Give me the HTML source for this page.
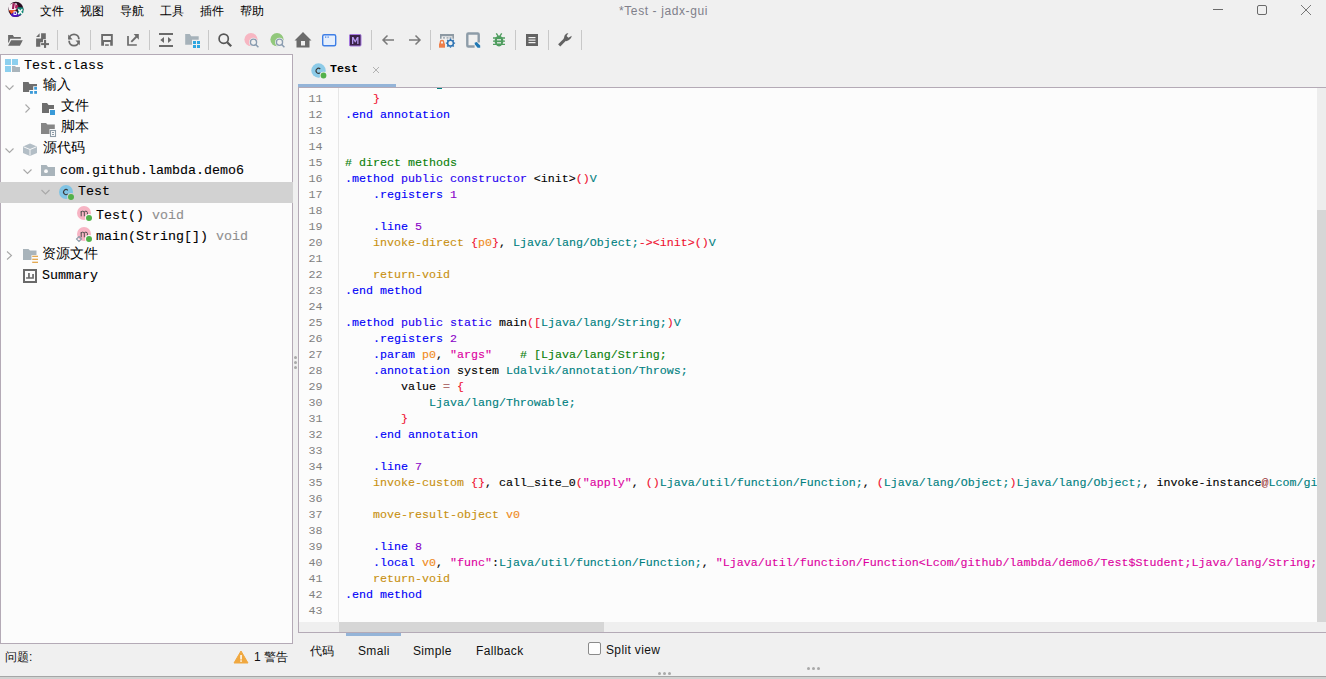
<!DOCTYPE html>
<html><head><meta charset="utf-8">
<style>
*{margin:0;padding:0;box-sizing:border-box}
html,body{width:1326px;height:679px;overflow:hidden;background:#f0f0f0;font-family:"Liberation Sans",sans-serif;color:#000}
.a{position:absolute}
.menu span{position:absolute;top:3px;font-size:12px;line-height:16px;color:#000}
.sep{position:absolute;top:31px;width:1px;height:19px;background:#c4c4c4}
.tb{position:absolute;top:32px;width:16px;height:16px}
#tree{left:0;top:54px;width:293px;height:590px;background:#fcfcfc;border:1px solid #b4aab6}
.row{position:absolute;-webkit-text-stroke:0.1px currentColor;font-family:"Liberation Mono",monospace;font-size:13.33px;line-height:16px;white-space:pre;color:#000}
.cjk{font-family:"Liberation Sans",sans-serif;font-size:14px;-webkit-text-stroke:0}
.chev{position:absolute;width:10px;height:6px}
#code{left:298px;top:87px;width:1028px;height:546px;background:#fcfcfc;border:1px solid #b4aab6;border-right:none}
.ln{position:absolute;left:0;width:23.5px;text-align:right;font-family:"Liberation Mono",monospace;font-size:11.667px;line-height:16px;color:#808080}
.cl{position:absolute;left:46px;-webkit-text-stroke:0.12px currentColor;font-family:"Liberation Mono",monospace;font-size:11.667px;line-height:16px;white-space:pre;color:#000}
.d{color:#0000f8}.m{color:#2800f0}.n{color:#8a00c8}.o{color:#c89010}.r{color:#f01030}.t{color:#00807f}.s{color:#dc00a0}.g{color:#0a800a}.p{color:#f08a20}.k{color:#000}.q{color:#b07070}.u{color:#a04040}
.btab{position:absolute;top:643px;font-size:12px;line-height:16px;letter-spacing:0.35px;color:#111}
</style></head><body>
<!-- title bar -->
<div class="a" style="left:0;top:0;width:1326px;height:25px;background:#f0f0f0"></div>
<svg class="a" style="left:0;top:0" width="30" height="20" viewBox="0 0 30 20">
<circle cx="15.9" cy="9.3" r="7.6" fill="#2a0e22"/>
<path d="M9 5L13 3L17 3.5L17.5 8.5L14.5 10.5H8.6Z" fill="#f6eef2"/>
<path d="M12.5 3.2L15 3L14 9L12 9Z" fill="#9a1a58"/>
<path d="M15.5 4L18.5 6L17 9L15 8Z" fill="#b02060"/>
<path d="M8.8 10.2L16 10L11.8 14.6Z" fill="#f25522"/>
<path d="M10.5 14.5L15 11.5L21 15.2L16 17L12 16.5Z" fill="#4a12c0"/>
<path d="M13.5 11.2H16.5Q18 13 16.5 15H13.5Z" fill="#f8f4fc"/>
<path d="M14.5 12.3H15.8Q16.6 13 15.8 14H14.5Z" fill="#4a12c0"/>
<path d="M17.3 7.2L23.2 7.5L23.4 12.5L21 15L17.5 14L18 11Z" fill="#128a78"/>
<path d="M18.3 9.3L22.3 14.2M22.3 9.3L18.3 14.2" stroke="#f4fbf8" stroke-width="1.5"/>
</svg>
<div class="menu">
 <span style="left:40px">文件</span><span style="left:80px">视图</span><span style="left:120px">导航</span><span style="left:160px">工具</span><span style="left:200px">插件</span><span style="left:240px">帮助</span>
</div>
<div class="a" style="left:619px;top:3px;font-size:12px;line-height:16px;letter-spacing:0.6px;color:#7f7f8a">*Test - jadx-gui</div>
<div class="a" style="left:1213px;top:9px;width:10px;height:1px;background:#6a6a6a"></div>
<div class="a" style="left:1257px;top:5px;width:10px;height:10px;border:1px solid #6a6a6a;border-radius:2px"></div>
<svg class="a" style="left:1300px;top:4px" width="12" height="12" viewBox="0 0 12 12"><path d="M1 1L11 11M11 1L1 11" stroke="#6a6a6a" stroke-width="0.9"/></svg>

<!-- toolbar -->
<svg class="a" style="left:0;top:0" width="600" height="54" viewBox="0 0 600 54">
<g fill="#c8c8c8">
<rect x="57" y="30" width="1" height="20"/><rect x="90" y="30" width="1" height="20"/><rect x="149" y="30" width="1" height="20"/><rect x="208" y="30" width="1" height="20"/><rect x="371" y="30" width="1" height="20"/><rect x="430" y="30" width="1" height="20"/><rect x="515" y="30" width="1" height="20"/><rect x="548" y="30" width="1" height="20"/><rect x="581" y="30" width="1" height="20"/>
</g>
<g fill="#6b6b6b">
<path d="M8.1 35H12.8L14 36.9H20.8V38.7H10.2L8.9 42.6H8.1Z"/>
<path d="M11.2 40.2H22.8L19.9 45.8H8.1Z"/>
<path d="M41.1 33.2H45.8V39.3H43V42.2H40.3V46.8H36.1V38.4H41.1Z"/><path d="M36.1 37L39.6 33.2V37Z"/><rect x="41.1" y="43.1" width="7.9" height="2"/><rect x="44" y="40" width="2.1" height="7.9"/>
<path d="M101.2 34H112.8V45.8H101.2ZM103 36V40H110.9V36ZM104 42V45.8H110.2V42Z" fill-rule="evenodd"/><rect x="105.1" y="44.3" width="3.7" height="1.5"/>
<path d="M159 33H173V35H159ZM159 45H173V47H159ZM160.3 40L164 37V43ZM171.6 40L168 37V43Z"/>
<path d="M294.5 40.5L303 32L311.5 40.5H309.5V47.5H296.5V40.5ZM301 41V45.5H305V41Z" fill-rule="evenodd"/>
<rect x="526" y="34" width="12" height="12" fill="#636363"/>
</g>
<g fill="none" stroke="#6b6b6b">
<path d="M69.1 39.2A4.9 4.9 0 0 1 78.9 39.2" stroke-width="1.8"/>
<path d="M78.9 40.8A4.9 4.9 0 0 1 69.1 40.8" stroke-width="1.8"/>
<path d="M128 36.1V45H136.8" stroke-width="1.7"/>
<path d="M131.3 41.8L136.6 36.5" stroke-width="1.9"/>
<circle cx="223.7" cy="38.7" r="4.6" stroke-width="1.7" stroke="#575757"/>
<path d="M227.2 42.2L231.2 46.2" stroke-width="2.3" stroke="#575757"/>
<path d="M383 40H394M387.5 35.5L383 40L387.5 44.5" stroke-width="1.5" stroke="#7a7a7a"/>
<path d="M420 40H409M415.5 35.5L420 40L415.5 44.5" stroke-width="1.5" stroke="#7a7a7a"/>
</g>
<path d="M68.2 34.5V39.5H72.6Z" fill="#6b6b6b"/>
<path d="M79.8 45.3V40.5H75.5Z" fill="#6b6b6b"/>
<path d="M133.7 34.1H138.8V39.8Z" fill="#6b6b6b"/>
<rect x="528.5" y="37" width="7" height="1.2" fill="#f4f4f4"/><rect x="528.5" y="39.5" width="7" height="1.2" fill="#f4f4f4"/><rect x="528.5" y="42" width="7" height="1.2" fill="#f4f4f4"/>
<path d="M185.2 34.1H189.7L191.2 36.2H198.7V39.8H192V44.7H185.2Z" fill="#a6b2ba"/>
<g fill="#2ea6e0"><rect x="193" y="41" width="3" height="3"/><rect x="197" y="41" width="3" height="3"/><rect x="193" y="45" width="3" height="3"/><rect x="197" y="45" width="3" height="3"/></g>
<circle cx="251" cy="39.6" r="6.6" fill="#f7b6c2"/><circle cx="253.5" cy="42.3" r="4.5" fill="#f0f0f0"/>
<circle cx="253.5" cy="42.3" r="3.1" fill="none" stroke="#8a9cb0" stroke-width="1.3"/><path d="M255.7 44.5L258.4 47.2" stroke="#8a9cb0" stroke-width="1.5"/>
<circle cx="277" cy="39.6" r="6.6" fill="#92c87c"/><circle cx="279.5" cy="42.3" r="4.5" fill="#f0f0f0"/>
<circle cx="279.5" cy="42.3" r="3.1" fill="none" stroke="#8a9cb0" stroke-width="1.3"/><path d="M281.7 44.5L284.4 47.2" stroke="#8a9cb0" stroke-width="1.5"/>
<rect x="322.7" y="34.7" width="13" height="11" rx="1.5" fill="#e6effc" stroke="#3f7fe6" stroke-width="1.4"/>
<rect x="325" y="36.5" width="1.3" height="1.2" fill="#3f7fe6"/><rect x="327.5" y="36.5" width="1.3" height="1.2" fill="#3f7fe6"/>
<rect x="349.5" y="34.5" width="11.5" height="11.5" rx="1" fill="#3a2248" stroke="#a678e0" stroke-width="1"/>
<path d="M352 44V37H353.5L355.2 40.5L357 37H358.5V44H357.2V39.5L355.5 42.5H355L353.3 39.5V44Z" fill="#b69af0"/>
<path d="M440 34H454V38.7H452.4V36.3H441.6V38.7H440Z" fill="#8d99a3"/>
<rect x="443" y="37.3" width="2" height="1.2" fill="#8d99a3"/><rect x="446.5" y="37.3" width="2" height="1.2" fill="#8d99a3"/><rect x="449.5" y="37.3" width="2" height="1.2" fill="#8d99a3"/>
<path d="M440.3 44V42.2A1.7 1.7 0 0 1 443.7 42.2V44" fill="none" stroke="#ef7f4a" stroke-width="1.4"/>
<rect x="439" y="43.5" width="6" height="4.2" fill="#ef7f4a"/>
<circle cx="450.5" cy="43.2" r="2.9" fill="none" stroke="#2f74b4" stroke-width="1.5"/>
<path d="M450.5 38.6V40M450.5 46.4V47.8M445.9 43.2H447.3M453.7 43.2H455.1M447.2 39.9L448.2 40.9M452.8 45.5L453.8 46.5M453.8 39.9L452.8 40.9M448.2 45.5L447.2 46.5" stroke="#2f74b4" stroke-width="1.3"/>
<path d="M467.3 42V34.5Q467.3 33.5 468.3 33.5H477.7Q478.7 33.5 478.7 34.5V42.4M474.6 46.5H468.3Q467.3 46.5 467.3 45.5V42" fill="none" stroke="#8d9ca8" stroke-width="2.4"/>
<path d="M474.6 42.8L476.6 42L480.2 45.6V47.8H477.6L474.9 44.6Z" fill="#1f78b4"/>
<g fill="#4f9d5f">
<ellipse cx="499" cy="41" rx="4.4" ry="5.4"/>
<path d="M496.3 33.3L498 36M501.7 33.3L500 36" stroke="#4f9d5f" stroke-width="1.4"/>
<path d="M493 38H505M493 41.2H505M493 44.4H505" stroke="#4f9d5f" stroke-width="1.3"/>
</g>
<rect x="497" y="39.2" width="4" height="1.2" fill="#f0f0f0"/><rect x="497" y="42.2" width="4" height="1.2" fill="#f0f0f0"/>
<path d="M559.2 45.4L565.6 39" stroke="#626262" stroke-width="3"/>
<path d="M563.6 39.2L564.6 35.6Q565.8 33.4 568.4 33.1L566.6 35.9L568.4 37.7L571.8 35.8Q571.6 38.6 569 39.9L566.4 41.2Z" fill="#626262"/>
</svg>

<!-- left tree -->
<div id="tree" class="a">
<div class="a" style="left:-1px;top:127px;width:293px;height:21px;background:#d2d2d2"></div>
<svg class="a" style="left:-1px;top:-55px" width="293" height="300" viewBox="0 0 293 300">
<g fill="#8ccfee"><rect x="5" y="59" width="6" height="6"/><rect x="12" y="59" width="6" height="6"/><rect x="5" y="66" width="6" height="6"/></g>
<path d="M12 66H15L16 67H20V72H12Z" fill="#a9b4bb"/>
<g fill="none" stroke="#a8a8a8" stroke-width="1.1">
<path d="M5.5 85.5L9.5 89.5L13.5 85.5"/>
<path d="M25.5 104.5L29.5 108.5L25.5 112.5"/>
<path d="M5.5 148.5L9.5 152.5L13.5 148.5"/>
<path d="M23.5 169.5L27.5 173.5L31.5 169.5"/>
<path d="M41.5 190L45.5 194L49.5 190"/>
<path d="M7 251.5L11.5 255.5L7 259.5"/>
</g>
<path d="M23 82H28.5L29.5 84H37V86.3H33.2V90H29.2V91.9H23Z" fill="#6e6e6e"/>
<g fill="#3a9ad8"><rect x="34.2" y="86.9" width="2.8" height="2.8"/><rect x="30" y="91" width="2.9" height="2.8"/><rect x="34.2" y="91" width="2.8" height="2.8"/></g>
<path d="M42 103H47L48.5 105H54V109H49V113H42Z" fill="#6e6e6e"/>
<rect x="50" y="110" width="5" height="5" fill="#3a9ad8"/>
<path d="M41 123H46L47.5 124.5H54.8V129H49.5V134H41Z" fill="#868686"/>
<rect x="50.5" y="130.5" width="5" height="6" fill="#fcfcfc" stroke="#8d9ca8" stroke-width="1.1"/>
<rect x="52" y="132" width="2" height="1" fill="#8d9ca8"/><rect x="52" y="134" width="2" height="1" fill="#8d9ca8"/>
<path d="M30 143.5L37 146.5V153L30 156L23 153V146.5Z" fill="#b3bec6"/>
<path d="M23.5 146.8L30 149.5L36.5 146.8M30 149.5V155.5" fill="none" stroke="#fcfcfc" stroke-width="0.9"/>
<path d="M41 165H46.5L48 167H55V176H41Z" fill="#a9b4bb"/>
<circle cx="46" cy="171.2" r="1.9" fill="#fcfcfc"/>
<circle cx="66" cy="192" r="7" fill="#80c4e4"/>
<path d="M67.8 190.3A2.5 2.5 0 1 0 67.8 193.9" fill="none" stroke="#3a3a3a" stroke-width="1.1"/>
<circle cx="71" cy="197" r="3.9" fill="#d2d2d2"/><circle cx="71" cy="197" r="3" fill="#52b14a"/>
<circle cx="84" cy="213" r="7" fill="#f7b4c4"/>
<path d="M81.2 216.3V211M81.2 212.3Q81.2 211.2 82.6 211.2Q84.3 211.2 84.3 212.5V216.3M84.3 212.5Q84.3 211.2 85.7 211.2Q87.4 211.2 87.4 212.5V216.3" fill="none" stroke="#4a4a4a" stroke-width="1"/>
<circle cx="89" cy="218" r="3.9" fill="#fcfcfc"/><circle cx="89" cy="218" r="3" fill="#52b14a"/>
<circle cx="84" cy="234" r="7" fill="#f7b4c4"/>
<path d="M81.2 237.3V232M81.2 233.3Q81.2 232.2 82.6 232.2Q84.3 232.2 84.3 233.5V237.3M84.3 233.5Q84.3 232.2 85.7 232.2Q87.4 232.2 87.4 233.5V237.3" fill="none" stroke="#4a4a4a" stroke-width="1"/>
<circle cx="89" cy="239" r="3.9" fill="#fcfcfc"/><circle cx="89" cy="239" r="3" fill="#52b14a"/>
<path d="M79 236.5L81.5 239L79 241.5L76.5 239Z" fill="none" stroke="#8c9aa8" stroke-width="1.1"/>
<path d="M23 249H28.5L30 250.5H36.5V255H31.5V260H23Z" fill="#a9b4bb"/>
<g fill="#e0a040"><rect x="32.2" y="255.7" width="5.8" height="1.2"/><rect x="32.2" y="258.7" width="5.8" height="1.2"/><rect x="32.2" y="261.7" width="5.8" height="1.2"/></g>
<rect x="24" y="270" width="12" height="12" fill="none" stroke="#6a6a6a" stroke-width="2"/>
<path d="M26.1 277.2H28.1V273.1H29.8V277.2H32.2V274.1H33.9V278.7H26.1Z" fill="#6a6a6a"/>
</svg>
<div class="row" style="left:23px;top:2.5px">Test.class</div>
<div class="row cjk" style="left:42px;top:21px">输入</div>
<div class="row cjk" style="left:60px;top:42px">文件</div>
<div class="row cjk" style="left:60px;top:63px">脚本</div>
<div class="row cjk" style="left:42px;top:84px">源代码</div>
<div class="row" style="left:59px;top:108px">com.github.lambda.demo6</div>
<div class="row" style="left:77px;top:129px">Test</div>
<div class="row" style="left:95px;top:153px">Test() <span style="color:#8f8f8f">void</span></div>
<div class="row" style="left:95px;top:174px">main(String[]) <span style="color:#8f8f8f">void</span></div>
<div class="row cjk" style="left:41px;top:190px">资源文件</div>
<div class="row" style="left:41px;top:212.5px">Summary</div>
</div>

<!-- splitter -->
<div class="a" style="left:294px;top:54px;width:4px;height:589px;background:#f0f0f0"></div>

<!-- code panel -->
<div id="code" class="a">
<div class="a" style="left:0;top:0;width:1018px;height:534px;overflow:hidden;background:#fcfcfc">
<div class="a" style="left:39px;top:0;width:1px;height:535px;background:#e6e6e6"></div>
<div class="ln" style="top:2.90px">11</div>
<div class="cl" style="top:2.90px">    <span class="r">}</span></div>
<div class="ln" style="top:18.90px">12</div>
<div class="cl" style="top:18.90px"><span class="d">.end annotation</span></div>
<div class="ln" style="top:34.90px">13</div>
<div class="ln" style="top:50.90px">14</div>
<div class="ln" style="top:66.90px">15</div>
<div class="cl" style="top:66.90px"><span class="g"># direct methods</span></div>
<div class="ln" style="top:82.90px">16</div>
<div class="cl" style="top:82.90px"><span class="d">.method</span><span class="m"> public constructor</span><span class="k"> &lt;init&gt;</span><span class="r">()</span><span class="t">V</span></div>
<div class="ln" style="top:98.90px">17</div>
<div class="cl" style="top:98.90px"><span class="d">    .registers</span><span class="n"> 1</span></div>
<div class="ln" style="top:114.90px">18</div>
<div class="ln" style="top:130.90px">19</div>
<div class="cl" style="top:130.90px"><span class="d">    .line</span><span class="n"> 5</span></div>
<div class="ln" style="top:146.90px">20</div>
<div class="cl" style="top:146.90px"><span class="o">    invoke-direct</span><span class="r"> {</span><span class="p">p0</span><span class="r">}</span><span class="k">, </span><span class="t">Ljava/lang/Object;</span><span class="r">-&gt;&lt;init&gt;()</span><span class="t">V</span></div>
<div class="ln" style="top:162.90px">21</div>
<div class="ln" style="top:178.90px">22</div>
<div class="cl" style="top:178.90px"><span class="o">    return-void</span></div>
<div class="ln" style="top:194.90px">23</div>
<div class="cl" style="top:194.90px"><span class="d">.end method</span></div>
<div class="ln" style="top:210.90px">24</div>
<div class="ln" style="top:226.90px">25</div>
<div class="cl" style="top:226.90px"><span class="d">.method</span><span class="m"> public static</span><span class="k"> main</span><span class="r">([</span><span class="t">Ljava/lang/String;</span><span class="r">)</span><span class="t">V</span></div>
<div class="ln" style="top:242.90px">26</div>
<div class="cl" style="top:242.90px"><span class="d">    .registers</span><span class="n"> 2</span></div>
<div class="ln" style="top:258.90px">27</div>
<div class="cl" style="top:258.90px"><span class="d">    .param</span><span class="p"> p0</span><span class="k">, </span><span class="s">&quot;args&quot;</span><span class="g">    # [Ljava/lang/String;</span></div>
<div class="ln" style="top:274.90px">28</div>
<div class="cl" style="top:274.90px"><span class="d">    .annotation</span><span class="k"> system </span><span class="t">Ldalvik/annotation/Throws;</span></div>
<div class="ln" style="top:290.90px">29</div>
<div class="cl" style="top:290.90px"><span class="k">        value </span><span class="q">=</span><span class="r"> {</span></div>
<div class="ln" style="top:306.90px">30</div>
<div class="cl" style="top:306.90px"><span class="t">            Ljava/lang/Throwable;</span></div>
<div class="ln" style="top:322.90px">31</div>
<div class="cl" style="top:322.90px"><span class="r">        }</span></div>
<div class="ln" style="top:338.90px">32</div>
<div class="cl" style="top:338.90px"><span class="d">    .end annotation</span></div>
<div class="ln" style="top:354.90px">33</div>
<div class="ln" style="top:370.90px">34</div>
<div class="cl" style="top:370.90px"><span class="d">    .line</span><span class="n"> 7</span></div>
<div class="ln" style="top:386.90px">35</div>
<div class="cl" style="top:386.90px"><span class="o">    invoke-custom</span><span class="r"> {}</span><span class="k">, call_site_0</span><span class="r">(</span><span class="s">&quot;apply&quot;</span><span class="k">, </span><span class="r">()</span><span class="t">Ljava/util/function/Function;</span><span class="k">, </span><span class="r">(</span><span class="t">Ljava/lang/Object;</span><span class="r">)</span><span class="t">Ljava/lang/Object;</span><span class="k">, invoke-instance</span><span class="u">@</span><span class="t">Lcom/github/lambda/demo6/Test$Student;-&gt;lambda$main$0(Lcom/github/lambda/demo6/Test$Student;)Ljava/lang/String;</span></div>
<div class="ln" style="top:402.90px">36</div>
<div class="ln" style="top:418.90px">37</div>
<div class="cl" style="top:418.90px"><span class="o">    move-result-object</span><span class="p"> v0</span></div>
<div class="ln" style="top:434.90px">38</div>
<div class="ln" style="top:450.90px">39</div>
<div class="cl" style="top:450.90px"><span class="d">    .line</span><span class="n"> 8</span></div>
<div class="ln" style="top:466.90px">40</div>
<div class="cl" style="top:466.90px"><span class="d">    .local</span><span class="p"> v0</span><span class="k">, </span><span class="s">&quot;func&quot;</span><span class="k">:</span><span class="t">Ljava/util/function/Function;</span><span class="k">, </span><span class="s">&quot;Ljava/util/function/Function&lt;Lcom/github/lambda/demo6/Test$Student;Ljava/lang/String;&gt;;&quot;</span></div>
<div class="ln" style="top:482.90px">41</div>
<div class="cl" style="top:482.90px"><span class="o">    return-void</span></div>
<div class="ln" style="top:498.90px">42</div>
<div class="cl" style="top:498.90px"><span class="d">.end method</span></div>
<div class="ln" style="top:514.90px">43</div>
</div>
<div class="a" style="left:1018px;top:0;width:9px;height:122px;background:#ededed"></div>
<div class="a" style="left:1018px;top:122px;width:9px;height:412px;background:#d6d6d6"></div>
<div class="a" style="left:0;top:534px;width:40px;height:10px;background:#efefef"></div>
<div class="a" style="left:40px;top:534px;width:265px;height:10px;background:#d6d6d6"></div>
<div class="a" style="left:305px;top:534px;width:722px;height:10px;background:#efefef"></div>
</div>


<!-- tab -->
<svg class="a" style="left:310px;top:62px" width="18" height="18" viewBox="0 0 18 18">
<circle cx="8.5" cy="8.5" r="7.2" fill="#8ccbe8"/>
<path d="M10.3 7A2.5 2.5 0 1 0 10.3 10.6" fill="none" stroke="#3a3a3a" stroke-width="1.1"/>
<circle cx="13.5" cy="13.5" r="3.7" fill="#f0f0f0"/><circle cx="13.5" cy="13.5" r="2.9" fill="#52b14a"/>
</svg>
<div class="a" style="left:330px;top:61px;font-family:'Liberation Mono',monospace;font-weight:bold;font-size:11.67px;line-height:16px">Test</div>
<svg class="a" style="left:372px;top:66px" width="8" height="8" viewBox="0 0 8 8"><path d="M1 1L7 7M7 1L1 7" stroke="#b2b2b2" stroke-width="1"/></svg>
<div class="a" style="left:298px;top:84px;width:98px;height:3px;background:#94b4d8"></div>
<div class="a" style="left:437px;top:88px;width:5px;height:1px;background:#00807f"></div>
<!-- splitter dots -->
<div class="a" style="left:294px;top:356px;width:3px;height:3px;border-radius:50%;background:#a9a9a9"></div>
<div class="a" style="left:294px;top:361px;width:3px;height:3px;border-radius:50%;background:#a9a9a9"></div>
<div class="a" style="left:294px;top:366px;width:3px;height:3px;border-radius:50%;background:#a9a9a9"></div>
<!-- bottom tabs -->
<div class="a" style="left:346px;top:633px;width:55px;height:3px;background:#94b4d8"></div>
<div class="btab" style="left:310px">代码</div>
<div class="btab" style="left:358px">Smali</div>
<div class="btab" style="left:413px">Simple</div>
<div class="btab" style="left:476px">Fallback</div>
<div class="a" style="left:588px;top:642px;width:13px;height:13px;border:1px solid #8a8a8a;border-radius:2px;background:#fdfdfd"></div>
<div class="btab" style="left:606px;top:642px">Split view</div>
<div class="a" style="left:658px;top:672px;width:3px;height:3px;border-radius:50%;background:#a9a9a9"></div>
<div class="a" style="left:663px;top:672px;width:3px;height:3px;border-radius:50%;background:#a9a9a9"></div>
<div class="a" style="left:668px;top:672px;width:3px;height:3px;border-radius:50%;background:#a9a9a9"></div>
<div class="a" style="left:807px;top:667px;width:3px;height:3px;border-radius:50%;background:#a9a9a9"></div>
<div class="a" style="left:812px;top:667px;width:3px;height:3px;border-radius:50%;background:#a9a9a9"></div>
<div class="a" style="left:817px;top:667px;width:3px;height:3px;border-radius:50%;background:#a9a9a9"></div>
<!-- status -->
<div class="a" style="left:5px;top:649px;font-size:12px;line-height:16px;color:#111">问题:</div>
<svg class="a" style="left:233px;top:650px" width="16" height="14" viewBox="0 0 16 14"><path d="M8 1L15 13H1Z" fill="#f0a840" stroke="#f0a840" stroke-linejoin="round" stroke-width="1"/><rect x="7.3" y="5" width="1.5" height="4.5" fill="#fff"/><rect x="7.3" y="10.3" width="1.5" height="1.5" fill="#fff"/></svg>
<div class="a" style="left:254px;top:649px;font-size:12px;line-height:16px;color:#111">1 警告</div>
<!-- bottom edge -->
<div class="a" style="left:0;top:676px;width:1326px;height:1px;background:#a6a6a6"></div>
<div class="a" style="left:0;top:677px;width:1326px;height:2px;background:#d1d2d1"></div>
</body></html>
